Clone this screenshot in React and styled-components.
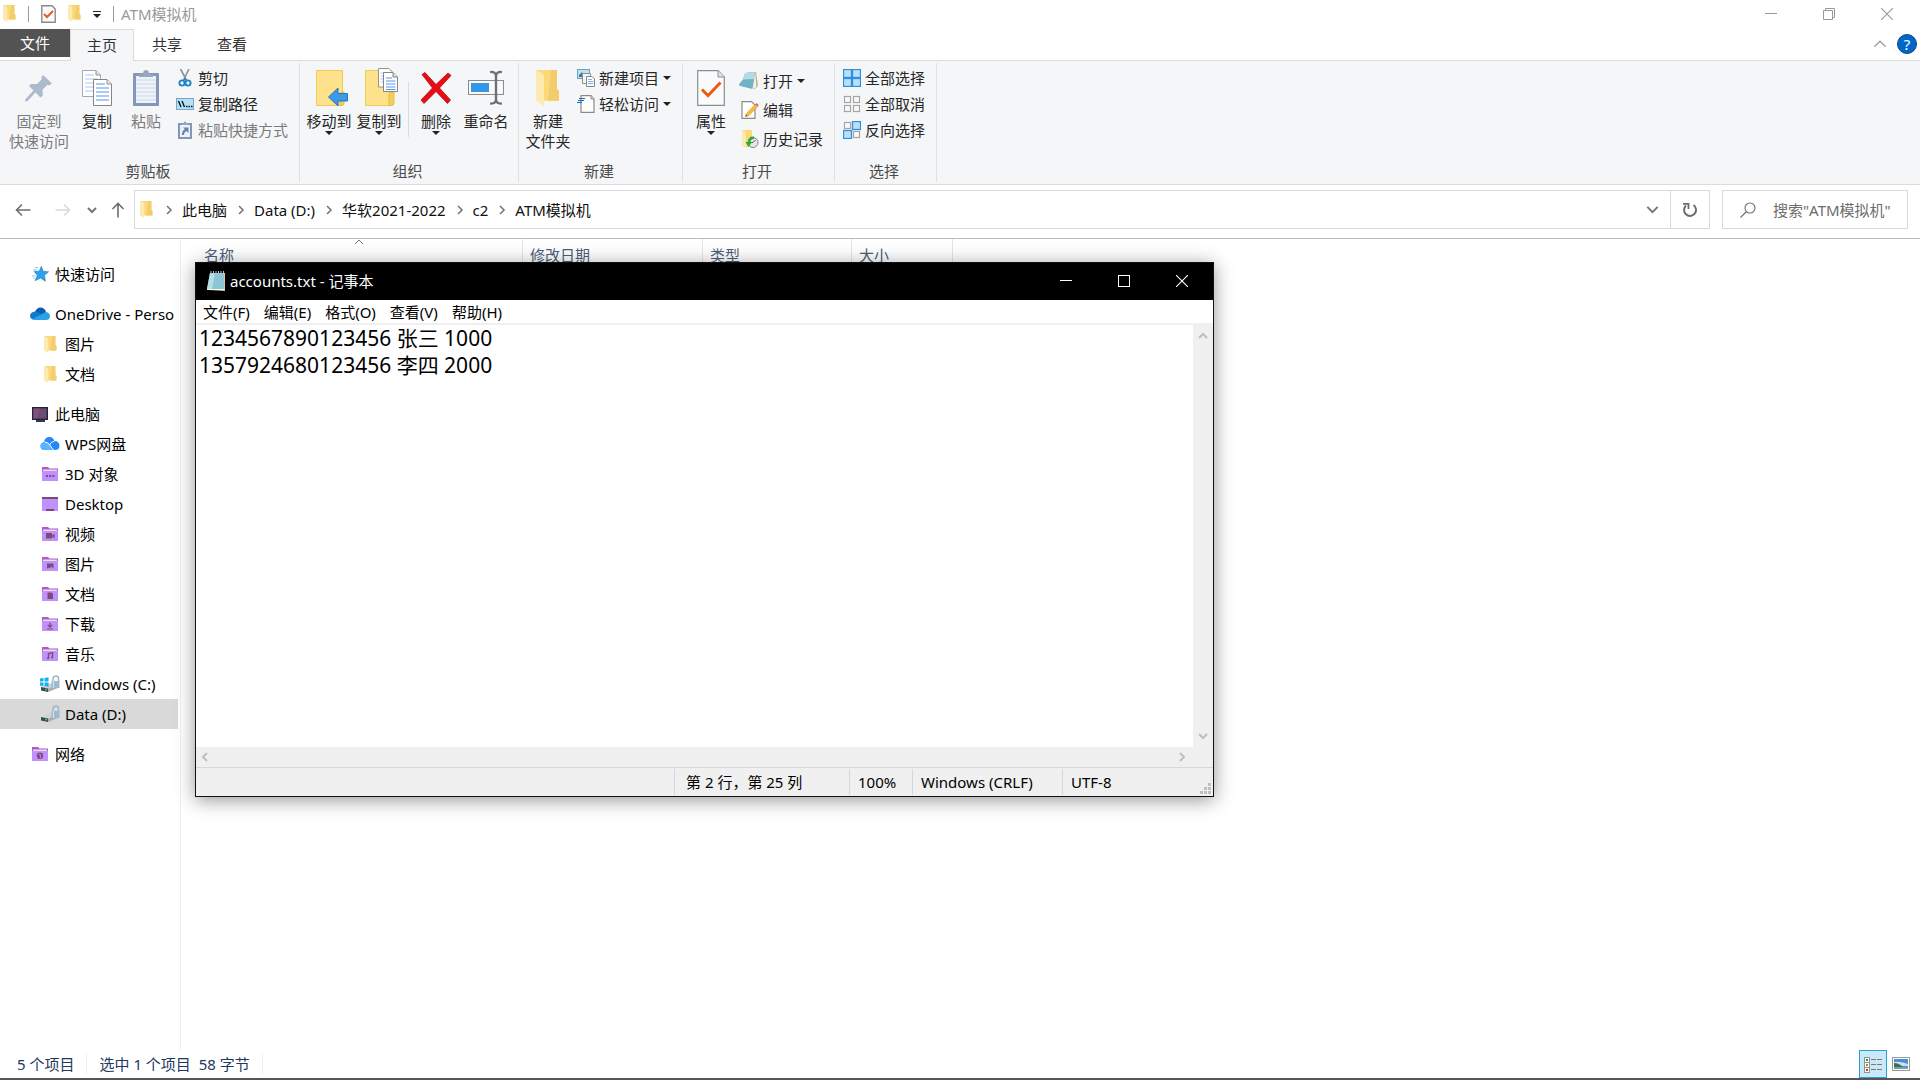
import React, { useState } from 'react';
import styled, { createGlobalStyle } from 'styled-components';

const GlobalStyle = createGlobalStyle`
  * {
    box-sizing: border-box;
  }

  body {
    margin: 0;
    background: #fff;
    overflow: hidden;
  }

  body, button, input, textarea {
    font-family: "Noto Sans", "Noto Sans CJK SC", sans-serif;
    font-size: 15px;
    line-height: 20px;
  }

  button {
    margin: 0;
    padding: 0;
    border: 0;
    background: none;
    color: inherit;
    white-space: nowrap;
  }

  svg {
    display: block;
    flex: none;
  }
`;

/* ---------- icons ---------- */

const FolderIcon = ({ width = 13, height = 17 }) => (
  <svg width={width} height={height} viewBox="0 0 24 34" preserveAspectRatio="none">
    <path d="M7 0H21V18L23 20V29H7Z" fill="#fbd878" />
    <path d="M15 0H21V18L23 20V29H12Z" fill="#f3cd6c" />
    <path d="M0 0L8 5V34L0 29Z" fill="#fdeab0" />
    <path d="M0 0H8V5Z" fill="#f6d98a" />
  </svg>
);

const CheckDocIcon = ({ width = 28, height = 36 }) => (
  <svg width={width} height={height} viewBox="0 0 28 36">
    <path d="M.7.7H21L27.3 7V35.3H.7Z" fill="#fafbfc" stroke="#8d8d8d" strokeWidth="1.2" />
    <path d="M21 .7V7H27.3" fill="#e4e4e4" stroke="#8d8d8d" />
    <path d="M5 19.5L11 25.5L23.5 12.5" fill="none" stroke="#ee5a14" strokeWidth="3" />
  </svg>
);

const SmallCheckDocIcon = () => (
  <svg width="15" height="18" viewBox="0 0 15 18">
    <path d="M.8.8H11L14.2 4V17.2H.8Z" fill="#f8fafb" stroke="#8a8a8a" strokeWidth="1.4" />
    <path d="M3 9L6 12L12 6" fill="none" stroke="#ee5a14" strokeWidth="2" />
  </svg>
);

const PinIcon = () => (
  <svg width="28" height="36" viewBox="0 0 28 36">
    <path d="M18 5L27 13.500L24 15.500L22.500 14.800L17.500 19.500L17.800 25.500L15.500 27.500L10.500 22.500L2.500 31L0 31.500L.5 29L8.500 20.500L4 16L6 14L12 14L17 9L16.200 7.500Z" fill="#adb9cd" />
  </svg>
);

const Page = ({ x, y, line = '#5593ee', light }) => (
  <g transform={`translate(${x} ${y})`}>
    <path d="M.5.5H14L18.500 5V26.500H.5Z" fill="#fff" stroke={light ? '#a9a9a9' : '#858585'} />
    <path d="M14 .5V5H18.500" fill="#e6e6e6" stroke="#929292" />
    <path d="M3 5H12M3 9H16M3 13H16M3 17H16M3 21H16" stroke={line} strokeWidth="1.200" />
  </g>
);

const CopyIcon = () => (
  <svg width="30" height="36" viewBox="0 0 30 36">
    <Page x={0} y={0} line="#a9c8f5" light />
    <Page x={11} y={9} />
  </svg>
);

const PasteIcon = () => (
  <svg width="26" height="36" viewBox="0 0 26 36">
    <rect y="3" width="26" height="33" rx="1" fill="#8497b9" />
    <rect x="3" y="6" width="20" height="27" fill="#eef2f9" />
    <path d="M3 10H23M3 14H23M3 18H23M3 22H23M3 26H23M3 30H23" stroke="#cdd8ea" />
    <path d="M6 7V4H10Q10 0 13 0Q16 0 16 4H20V7Z" fill="#97a6bf" />
  </svg>
);

const ScissorsIcon = () => (
  <svg width="18" height="18" viewBox="0 0 18 18">
    <path d="M4.500 0L11 12M13 0L7 12" stroke="#8b9298" strokeWidth="1.600" />
    <circle cx="6" cy="14" r="2.600" fill="none" stroke="#1c84c6" strokeWidth="1.900" />
    <circle cx="12" cy="14" r="2.600" fill="none" stroke="#1c84c6" strokeWidth="1.900" />
    <path d="M7.500 11.500L9 8.500L10.500 11.500Z" fill="#1c84c6" />
  </svg>
);

const PathIcon = () => (
  <svg width="18" height="12" viewBox="0 0 18 12">
    <rect x=".5" y=".5" width="17" height="11" fill="#b5e0fb" stroke="#7ba6c2" />
    <path d="M2.500 3L5 9M6 3L8.500 9" stroke="#111" strokeWidth="1.400" />
    <path d="M10 8.500H11.500M12.500 8.500H14M15 8.500H16.500" stroke="#111" strokeWidth="1.400" />
  </svg>
);

const PasteShortcutIcon = () => (
  <svg width="18" height="18" viewBox="0 0 18 18">
    <rect x="2" y="2" width="14" height="16" fill="#8497b9" />
    <rect x="4" y="4" width="10" height="12" fill="#eef2f9" />
    <path d="M6 4V2H7.500Q9-1.500 10.500 2H12V4Z" fill="#97a6bf" />
    <path d="M7 6.500H12.500V12L10.700 10.200Q8 11 8 14H6Q5.500 10.500 8.700 8.200Z" fill="#6d83ab" />
  </svg>
);

const MoveToIcon = () => (
  <svg width="38" height="36" viewBox="-6 0 38 36">
    <path d="M.5.5H26.500V35.500H.5Z" fill="#fde28b" stroke="#eccb58" />
    <path d="M24 35.500V24Q24 22 26 22H28V33.500Q28 35.500 25.500 35.500Z" fill="#f4cf60" stroke="#e5bd42" />
    <path d="M12.500 27L22 18V23.500H31.500V31H22V36Z" fill="#3b9ae8" stroke="#1f76c2" />
  </svg>
);

const CopyToIcon = () => (
  <svg width="40" height="38" viewBox="-6 0 40 38">
    <path d="M.5 2.500H26.500V37.500H.5Z" fill="#fde28b" stroke="#eccb58" />
    <path d="M24 37.500V26Q24 24 26 24H29V35.500Q29 37.500 26 37.500Z" fill="#f4cf60" stroke="#e5bd42" />
    <path d="M13.500.5H24L27.500 4V19H13.500Z" fill="#fff" stroke="#929292" />
    <path d="M15.500 5H22M15.500 8H22M15.500 11H22M15.500 14H22" stroke="#a9c8f5" />
    <path d="M18.500 4.500H28L32.500 9V23.500H18.500Z" fill="#fff" stroke="#858585" />
    <path d="M28 4.500V9H32.500" fill="#ddd" stroke="#858585" />
    <path d="M21 10H27M21 13H30.500M21 16H30.500M21 19H30.500M21 21.500H30.500" stroke="#5593ee" strokeWidth="1.200" />
  </svg>
);

const DeleteIcon = () => (
  <svg width="32" height="36" viewBox="0 0 32 36">
    <path d="M2 4.500L5 2.500L16 14.500L28 3L31 5.500L19.500 18L30.500 30L27.500 33.500L16 21.500L4 33.500L1 30L12.500 18Z" fill="#e60d17" stroke="#b30d14" strokeWidth=".8" />
  </svg>
);

const RenameIcon = () => (
  <svg width="36" height="36" viewBox="0 0 36 36">
    <rect x=".5" y="10.500" width="35" height="14" fill="#f8f9fa" stroke="#8b8b8b" />
    <rect x="3" y="13" width="18" height="9" fill="#3298e6" />
    <path d="M28 3V32" stroke="#707070" strokeWidth="2.400" />
    <path d="M22 2Q27 1.500 28 5Q29 1.500 34 2M22 33.500Q27 34 28 30.500Q29 34 34 33.500" fill="none" stroke="#707070" strokeWidth="2.200" />
  </svg>
);

const NewItemIcon = () => (
  <svg width="18" height="18" viewBox="0 0 18 18">
    <rect x=".5" y=".5" width="12" height="9" fill="#bfe2f4" stroke="#6f9fb9" />
    <path d="M2 6L5 3L7 8H2Z" fill="#2f8291" />
    <path d="M5.500 4.500H13.500V14.500H5.500Z" fill="#f4f4f4" stroke="#8f8f8f" />
    <path d="M9.500 7.500H15L17.500 10V17.500H9.500Z" fill="#fff" stroke="#878787" />
    <path d="M11 10.500H15M11 12.500H16.500M11 14.500H16.500" stroke="#7fb0ea" />
  </svg>
);

const EasyAccessIcon = () => (
  <svg width="18" height="18" viewBox="0 0 18 18">
    <path d="M4 .6H14L17 4V17.400H4Z" fill="#fff" stroke="#8a8a8a" strokeWidth="1.200" />
    <path d="M14 .6V4H17" fill="#ddd" stroke="#8a8a8a" />
    <path d="M2 3.500H8M1 5.500H7M0 7.500H5" stroke="#1e6cb5" strokeWidth="1.200" />
  </svg>
);

const OpenIcon = () => (
  <svg width="20" height="18" viewBox="0 0 20 18">
    <path d="M7 1L17 0L19 14L15 17.500Z" fill="#c6a877" />
    <path d="M6 1L16 0L14.500 15L13.500 17L1 14Q-1 13 1 11Q4.500 8 6 1Z" fill="#6fb3c4" />
    <path d="M6 1L16 0L15.200 7L4 7.500Z" fill="#b3dce6" />
    <path d="M13.500 17L16.300.5L17.500 15Z" fill="#f1efe9" />
  </svg>
);

const EditIcon = () => (
  <svg width="20" height="18" viewBox="0 0 20 18">
    <path d="M3 .6H12.500L16 4V17.400H3Z" fill="#fff" stroke="#8a8a8a" strokeWidth="1.200" />
    <path d="M6.500 15.500L7.500 12.500L16 3.500L18.500 5.500L10 14.500Z" fill="#f6bd3c" stroke="#d28e1e" strokeWidth=".6" />
    <path d="M16 3.500L17.500 2L19.800 4L18.500 5.500Z" fill="#df6b66" />
    <path d="M6.500 15.500L7 13.800L8.300 15Z" fill="#333" />
  </svg>
);

const HistoryIcon = () => (
  <svg width="20" height="18" viewBox="0 0 20 18">
    <path d="M3 0H13V17H5L3 15Z" fill="#fbd878" />
    <path d="M3 0L7 2V18L3 15Z" fill="#fdeab0" />
    <circle cx="14" cy="12.500" r="5" fill="#e6e6e6" stroke="#858585" />
    <path d="M14 12.500L16.500 10M14 12.500H11.500" stroke="#555" />
    <path d="M15 6.500Q9 6 9 12L6.500 12L9.500 17L13 12H11.500Q11.500 9 15 9Z" fill="#27ae35" />
  </svg>
);

// `on` lists which of the four tiles are highlighted
const TilesIcon = ({ on }) => (
  <svg width="18" height="18" viewBox="0 0 18 18">
    {[[0, 0], [1, 0], [0, 1], [1, 1]].map(([cx, cy], i) => (
      on[i]
        ? <rect key={i} x={cx * 9 + 0.5} y={cy * 9 + 0.5} width="8" height="8" fill="#b9e0fb" stroke="#2f8fdc" strokeWidth="1.300" />
        : <rect key={i} x={cx * 9 + 1.5} y={cy * 9 + 1.5} width="6" height="6" fill="#fafafa" stroke="#a5a5a5" strokeWidth="1.200" />
    ))}
  </svg>
);

const Chevron = ({ dir = 'down', size = 10, color = '#767676', weight = 2 }) => {
  const paths = {
    down: 'M1 3L5 7L9 3',
    up: 'M1 7L5 3L9 7',
    left: 'M7 1L3 5L7 9',
    right: 'M3 1L7 5L3 9',
  };
  return (
    <svg width={size} height={size} viewBox="0 0 10 10">
      <path d={paths[dir]} fill="none" stroke={color} strokeWidth={weight * 10 / size} />
    </svg>
  );
};

const MinimizeGlyph = () => (
  <svg width="12" height="12"><path d="M0 5.500H12" stroke="currentColor" /></svg>
);

const RestoreGlyph = () => (
  <svg width="12" height="12">
    <path d="M.5 2.500H9.500V11.500H.5ZM2.500 2.500V.5H11.500V9.500H9.500" fill="none" stroke="currentColor" />
  </svg>
);

const MaximizeGlyph = () => (
  <svg width="12" height="12"><rect x=".5" y=".5" width="11" height="11" fill="none" stroke="currentColor" /></svg>
);

const CloseGlyph = () => (
  <svg width="12" height="12"><path d="M0 0L12 12M12 0L0 12" stroke="currentColor" strokeWidth="1.100" /></svg>
);

const ArrowGlyph = ({ color, dir }) => (
  <svg width="16" height="16" viewBox="0 0 16 16">
    <path
      d="M15.500 8H1.500M7 2.500L1.500 8L7 13.500"
      fill="none"
      stroke={color}
      strokeWidth="1.600"
      transform={`rotate(${dir} 8 8)`}
    />
  </svg>
);

const RefreshIcon = () => (
  <svg width="16" height="16" viewBox="0 0 16 16">
    <path d="M11.500 3A6 6 0 1 1 4 3.500" fill="none" stroke="#6d6d6d" strokeWidth="2" />
    <path d="M1 1.800H6.500V7" fill="none" stroke="#6d6d6d" strokeWidth="1.800" />
  </svg>
);

const SearchIcon = () => (
  <svg width="16" height="16" viewBox="0 0 16 16">
    <circle cx="10" cy="6" r="5" fill="none" stroke="#6d6d6d" strokeWidth="1.100" />
    <path d="M6.500 9.500L.5 15.500" stroke="#6d6d6d" strokeWidth="1.100" />
  </svg>
);

const StarIcon = () => (
  <svg width="18" height="16" viewBox="0 0 20 17">
    <path d="M11.500 0L13.500 5.500L19.500 6L15 10L16 16.500L10.500 13L4.500 16L7 10L3.500 5.800L9 5.500Z" fill="#2aa3ea" stroke="#1673bd" strokeWidth=".6" />
    <path d="M4 1.500H8M2 4H7M1 10.500H5M2 13H4" stroke="#79bfe8" />
  </svg>
);

const OneDriveIcon = () => (
  <svg width="20" height="14" viewBox="0 0 20 14">
    <path d="M5 5Q7 0 11 .5Q15 1 16 5L13 9L5 6Z" fill="#0a5cb0" />
    <path d="M3 12.500Q0 11.500 0 8.500Q.5 5 5 4.500Q8 4.500 12 7.500L5 13Z" fill="#1078d2" />
    <path d="M12 7L16 5Q20 5.500 20 9.500Q19.500 13 16 13H5Q3.500 13 2.500 12Z" fill="#28a2e8" />
  </svg>
);

const ComputerIcon = () => (
  <svg width="16" height="15" viewBox="0 0 16 15">
    <rect x=".7" y=".7" width="14.600" height="11.600" fill="#6c4a74" stroke="#22243a" strokeWidth="1.400" />
    <path d="M1.500 1.500H8L5 11.500H1.500Z" fill="#82507a" />
    <rect x="4" y="13" width="9" height="2" fill="#34364b" />
  </svg>
);

const WpsIcon = () => (
  <svg width="20" height="14" viewBox="0 0 20 14">
    <path d="M4 5Q5 0 9.500 0Q13 0 14.500 4Q19 4 19.500 8.500Q19.500 13 15 13H5Q.5 13 .5 9Q.5 6 4 5Z" fill="#2487fb" />
    <path d="M4.500 5.500Q8 5 10 8.500L13 13H5Q.5 13 .5 9Q.5 6 4.500 5.500Z" fill="#57b4ff" />
    <path d="M4.500 5Q8.500 5 10.500 9Q12 12 14 13M14.500 4Q10.500 5 9.500 8" fill="none" stroke="#fff" strokeWidth="1" />
  </svg>
);

const purpleGlyphs = {
  objects: <path d="M4 9H6M7.200 9H9.200M10.400 9H12.400" stroke="#7f4a78" strokeWidth="1.800" />,
  video: <path d="M4 6H10V11.500H4ZM10 8.500L12.500 6.500V11.500L10 9.500Z" fill="#7f4a78" />,
  picture: <path d="M5 6.500H11.500V12L9.500 9.500L7.500 11.500L6.500 10.500L5 12Z" fill="#7f4a78" />,
  document: <path d="M5.500 5.500H9.500L11 7V12H5.500Z" fill="#7f4a78" />,
  download: <path d="M8 5.500V10M5.800 8L8 10.200L10.200 8M5 12H11" fill="none" stroke="#7f4a78" strokeWidth="1.200" />,
  music: <path d="M6.500 11V6.500L10.500 5.800V10.200M5 11.300H7M9 10.500H11" fill="none" stroke="#7f4a78" strokeWidth="1.400" />,
  network: (
    <>
      <circle cx="8" cy="8.800" r="3.200" fill="#7f4a78" />
      <path d="M6.500 7L9 8L8 10L9.500 11" fill="none" stroke="#bf92fb" strokeWidth=".9" />
    </>
  ),
};

const PurpleFolderIcon = ({ glyph }) => (
  <svg width="16" height="14" viewBox="0 0 16 14">
    <path d="M0 0H6L7.500 1.500H16V6H0Z" fill="#ae5bc8" />
    <rect x="1" y="2.500" width="14" height="2" fill="#eadcf2" />
    <rect y="4" width="16" height="10" fill="#bf92fb" />
    {purpleGlyphs[glyph]}
  </svg>
);

const DesktopIcon = () => (
  <svg width="16" height="14" viewBox="0 0 16 14">
    <rect width="16" height="14" fill="#bf92fb" />
    <rect width="16" height="2" fill="#7d4879" />
    <rect x="4" y="12" width="8" height="2" fill="#7d4879" />
  </svg>
);

const DriveIcon = ({ system }) => (
  <svg width="20" height="18" viewBox="0 0 20 18">
    <path d="M1 12L9 8.500H19V12L8 16.500L1 15Z" fill="#d0d3d4" />
    <path d="M1 12L8 13.500V17L1 15.500Z" fill="#454b48" />
    <path d="M8 13.500L19 9.500V12.500L8 17Z" fill="#a9aeb0" />
    <path d="M5 14.500H7" stroke="#35c84b" strokeWidth="1.300" />
    <path d="M13 7V3.500Q13.500 1 16 1Q18.500 1 18.500 3.500V6" fill="none" stroke="#a3b6c2" strokeWidth="1.500" />
    <rect x="11.500" y="6" width="8" height="7" fill="#9dbbcd" />
    <path d="M13.500 6V13" stroke="#d7e6ee" />
    {system && <path d="M0 3.500L3.500 3V6.500H0ZM4.500 2.900L8.500 2.300V6.500H4.500ZM0 7.500H3.500V11L0 10.500ZM4.500 7.500H8.500V11.700L4.500 11.100Z" fill="#12b1f2" />}
  </svg>
);

const NotepadIcon = () => (
  <svg width="20" height="20" viewBox="0 0 20 20">
    <path d="M6 2H19V20L3 19Z" fill="#d8c7a3" />
    <path d="M4 2H18V18H1Z" fill="#8cc6d4" />
    <path d="M4 2H9L6 18H1Z" fill="#b4dfe8" />
    <path d="M5 0V3M7.500 0V3M10 0V3M12.500 0V3M15 0V3M17.500 0V3" stroke="#b7c3c7" />
    <path d="M1 18H18V19H1Z" fill="#f5f5f2" />
  </svg>
);

const DetailsViewIcon = () => (
  <svg width="20" height="17" viewBox="0 0 20 17">
    {['#2f8a9b', '#879b22', '#c43c22'].map((color, i) => (
      <g key={color}>
        <rect x="1.500" y={i * 5 + 1.5} width="5" height="5" fill="#fff" stroke="#929292" />
        <rect x="3" y={i * 5 + 3} width="2" height="2" fill={color} />
        <path d={`M8 ${i * 5 + 3.5}H13M14 ${i * 5 + 3.5}H19`} stroke="#777" />
      </g>
    ))}
  </svg>
);

const ThumbnailViewIcon = () => (
  <svg width="18" height="14" viewBox="0 0 18 14">
    <rect x=".5" y=".5" width="17" height="13" fill="#fff" stroke="#999" />
    <rect x="2" y="2" width="14" height="10" fill="#4b8fd6" />
    <path d="M2 5Q8 4 16 7V9H2Z" fill="#c9e1f0" />
    <path d="M2 6Q7 6 11 10H2Z" fill="#39715c" />
    <path d="M2 10H16V12H2Z" fill="#7a9dab" />
  </svg>
);

const ResizeGrip = styled.svg`
  align-self: flex-end;
  margin: 0 2px 2px auto;
`;

/* ---------- explorer frame ---------- */

const Explorer = styled.div`
  display: flex;
  flex-direction: column;
  height: 100vh;
  border-bottom: 2px solid #555;
  color: #000;
`;

const TitleBar = styled.header`
  display: flex;
  align-items: center;
  height: 29px;
  padding: 0 4px 2px 3px;
  color: #999;
`;

const QuickTools = styled.div`
  display: flex;
  align-items: center;
  gap: 12px;
  margin-right: 7px;
`;

const BarLine = styled.span`
  width: 1px;
  height: 16px;
  background: #9a9a9a;
`;

const WindowButtons = styled.div`
  display: flex;
  align-self: stretch;
  margin-left: auto;
`;

const WindowButton = styled.button`
  display: flex;
  align-items: center;
  justify-content: center;
  width: 58px;
`;

const Caret = styled.span`
  border: 4px solid transparent;
  border-top-color: #222;
  border-bottom: 0;
`;

const BarredCaret = styled(Caret)`
  position: relative;
  margin: 4px 0 0;

  &::before {
    content: '';
    position: absolute;
    left: -4px;
    top: -7px;
    width: 8px;
    height: 1px;
    background: #222;
  }
`;

const TabStrip = styled.nav`
  display: flex;
  align-items: stretch;
  height: 32px;
  border-bottom: 1px solid #dadbdc;
  color: #333;
`;

const FileTab = styled.button`
  width: 70px;
  height: 28px;
  background: #535353;
  color: #fff;
`;

const Tab = styled.button`
  width: 64px;
  margin-right: 1px;
  padding-bottom: 2px;
  border: 1px solid ${({ $active }) => ($active ? '#dadbdc' : 'transparent')};
  border-bottom: 0;
  margin-bottom: ${({ $active }) => ($active ? '-1px' : '0')};
  background: ${({ $active }) => ($active ? '#f5f6f8' : 'transparent')};
`;

const TabTools = styled.div`
  display: flex;
  align-items: center;
  gap: 10px;
  margin-left: auto;
  padding: 0 3px 2px 0;
`;

const HelpButton = styled.button`
  width: 20px;
  height: 20px;
  border: 1px solid #10477f;
  border-radius: 50%;
  background: #0067c8;
  color: #fff;
  line-height: 18px;
`;

/* ---------- ribbon ---------- */

const Ribbon = styled.section`
  display: flex;
  flex: none;
  padding: 2px 0;
  border-bottom: 1px solid #dadbdc;
  background: #f5f6f8;
  color: #262626;
`;

const Group = styled.div`
  padding: 0 7px 0 4px;
  border-right: 1px solid #e0e1e3;
`;

const GroupBody = styled.div`
  display: flex;
  height: 98px;
`;

const GroupTitle = styled.div`
  height: 21px;
  text-align: center;
  color: #4a4a4a;
`;

const BigButton = styled.button`
  display: flex;
  flex-direction: column;
  align-items: center;
  width: ${({ $w }) => $w || 50}px;
  padding-top: 7px;
  color: ${({ disabled }) => (disabled ? '#7b7b7b' : '#262626')};
`;

const BigIcon = styled.span`
  display: flex;
  align-items: flex-end;
  justify-content: center;
  height: 36px;
  margin-bottom: 5px;
`;

const BigLabel = styled.span`
  white-space: pre-line;
`;

const GroupDivider = styled.span`
  width: 1px;
  height: 55px;
  margin: 19px 2px 0 4px;
  background: #dcdddf;
`;

const SmallColumn = styled.div`
  display: flex;
  flex-direction: column;
  padding-top: ${({ $roomy }) => ($roomy ? 3 : 2)}px;
`;

const SmallButton = styled.button`
  display: flex;
  align-items: center;
  gap: 4px;
  height: ${({ $roomy }) => ($roomy ? 29 : 26)}px;
  padding: 0 4px;
  color: ${({ disabled }) => (disabled ? '#7b7b7b' : '#262626')};
`;

/* ---------- address row ---------- */

const AddressRow = styled.div`
  display: flex;
  flex: none;
  align-items: center;
  height: 54px;
  padding: 0 12px 4px 15px;
  border-bottom: 1px solid #bcbcbc;
`;

const NavButtons = styled.div`
  display: flex;
  align-items: center;
  width: 119px;
`;

const NavButton = styled.button`
  margin-right: ${({ $gap }) => $gap}px;
`;

const AddressBox = styled.div`
  display: flex;
  flex: 1;
  align-items: center;
  height: 39px;
  padding-left: 5px;
  border: 1px solid #d9d9d9;
`;

const Crumbs = styled.ol`
  display: flex;
  flex: 1;
  margin: 0;
  padding: 0 0 0 2px;
  list-style: none;
`;

const Crumb = styled.li`
  display: flex;
  align-items: center;

  svg {
    margin: 0 8px 0 9px;
  }

  a {
    color: #111;
    text-decoration: none;
  }
`;

const DropButton = styled.button`
  display: flex;
  align-items: center;
  justify-content: center;
  width: 36px;
  height: 37px;
`;

const RefreshButton = styled(DropButton)`
  width: 39px;
  border-left: 1px solid #d9d9d9;
`;

const SearchBox = styled.label`
  display: flex;
  align-items: center;
  gap: 17px;
  width: 186px;
  height: 39px;
  margin-left: 12px;
  padding-left: 17px;
  border: 1px solid #d9d9d9;
`;

const SearchInput = styled.input`
  flex: 1;
  min-width: 0;
  padding: 0;
  border: 0;
  outline: 0;

  &::placeholder {
    color: #6d6d6d;
    opacity: 1;
  }
`;

/* ---------- body ---------- */

const Body = styled.div`
  display: flex;
  flex: 1;
  min-height: 0;
`;

const Sidebar = styled.nav`
  width: 181px;
  padding: 20px 2px 0 0;
  border-right: 1px solid #f0f0f0;
`;

const TreeSection = styled.div`
  margin-bottom: 10px;
`;

const TreeItem = styled.a`
  display: flex;
  align-items: center;
  gap: 5px;
  height: 30px;
  padding-left: ${({ $child }) => ($child ? 40 : 30)}px;
  overflow: hidden;
  background: ${({ $selected }) => ($selected ? '#d9d9d9' : 'transparent')};
  color: #000;
  text-decoration: none;
  white-space: nowrap;
`;

const TreeIcon = styled.span`
  display: flex;
  flex: none;
  justify-content: center;
  width: 20px;
`;

const FileList = styled.main`
  flex: 1;
`;

const FileTable = styled.table`
  border-collapse: separate;
  border-spacing: 0;
  table-layout: fixed;
  width: 772px;
`;

const ColumnHead = styled.th`
  position: relative;
  width: ${({ $w }) => $w}px;
  height: 32px;
  padding: 0 0 1px ${({ $first }) => ($first ? 23 : 7)}px;
  border-right: 1px solid #e5e5e5;
  color: #4c607a;
  font-weight: normal;
  text-align: left;
`;

const SortMark = styled.span`
  position: absolute;
  top: -2px;
  left: 173px;
`;

const StatusBar = styled.footer`
  display: flex;
  flex: none;
  align-items: center;
  height: 28px;
  padding: 0 5px 0 17px;
  color: #1e395b;
`;

const StatusItem = styled.span`
  padding-right: 12px;
  margin-right: 12px;
  border-right: 1px solid #f0f0f0;
  white-space: pre;
`;

const ViewButtons = styled.div`
  display: flex;
  align-self: stretch;
  margin-left: auto;
`;

const ViewButton = styled.button`
  display: flex;
  align-items: center;
  justify-content: center;
  width: 28px;
  border: ${({ $active }) => ($active ? '1px solid #26a0da' : '0')};
  background: ${({ $active }) => ($active ? '#cbe8f6' : 'none')};
`;

/* ---------- notepad window ---------- */

const NotepadWindow = styled.section`
  position: absolute;
  left: 195px;
  top: 262px;
  display: flex;
  flex-direction: column;
  width: 1019px;
  height: 535px;
  border: 1px solid #111;
  background: #f0f0f0;
  box-shadow: 0 3px 18px rgba(0, 0, 0, 0.42);
`;

const NotepadTitle = styled.header`
  display: flex;
  align-items: center;
  gap: 4px;
  height: 37px;
  padding: 0 2px 2px 10px;
  background: #000;
  color: #fff;
`;

const MenuBar = styled.nav`
  display: flex;
  height: 25px;
  border-bottom: 2px solid #f0f0f0;
  background: #fff;
`;

const MenuItem = styled.button`
  padding: 0 7px;
`;

const EditorRow = styled.div`
  display: flex;
  flex: 1;
  min-height: 0;
`;

const Editor = styled.textarea`
  flex: 1;
  padding: 0 3px;
  border: 0;
  outline: 0;
  resize: none;
  overflow: hidden;
  background: #fff;
  color: #000;
  font-size: 21px;
  line-height: 27px;
  white-space: pre;
`;

const ScrollTrack = styled.div`
  display: flex;
  flex-direction: ${({ $vertical }) => ($vertical ? 'column' : 'row')};
  justify-content: space-between;
  align-items: center;
  ${({ $vertical }) => ($vertical
    ? 'width: 20px; padding: 6px 0;'
    : 'height: 20px; padding: 0 26px 0 4px;')}
`;

const NotepadStatus = styled.footer`
  display: flex;
  height: 29px;
  border-top: 1px solid #d7d7d7;
`;

const StatusCell = styled.span`
  width: ${({ $w }) => $w}px;
  margin: 1px 0;
  padding-left: ${({ $pad }) => $pad || 8}px;
  border-left: 1px solid #d7d7d7;
  line-height: 26px;
`;

const StatusSpacer = styled.span`
  width: 478px;
`;

/* ---------- data ---------- */

const crumbs = ['此电脑', 'Data (D:)', '华软2021-2022', 'c2', 'ATM模拟机'];

const tree = [
  [{ label: '快速访问', icon: <StarIcon /> }],
  [
    { label: 'OneDrive - Perso', icon: <OneDriveIcon /> },
    { label: '图片', icon: <FolderIcon />, child: true },
    { label: '文档', icon: <FolderIcon />, child: true },
  ],
  [
    { label: '此电脑', icon: <ComputerIcon /> },
    { label: 'WPS网盘', icon: <WpsIcon />, child: true },
    { label: '3D 对象', icon: <PurpleFolderIcon glyph="objects" />, child: true },
    { label: 'Desktop', icon: <DesktopIcon />, child: true },
    { label: '视频', icon: <PurpleFolderIcon glyph="video" />, child: true },
    { label: '图片', icon: <PurpleFolderIcon glyph="picture" />, child: true },
    { label: '文档', icon: <PurpleFolderIcon glyph="document" />, child: true },
    { label: '下载', icon: <PurpleFolderIcon glyph="download" />, child: true },
    { label: '音乐', icon: <PurpleFolderIcon glyph="music" />, child: true },
    { label: 'Windows (C:)', icon: <DriveIcon system />, child: true },
    { label: 'Data (D:)', icon: <DriveIcon />, child: true, selected: true },
  ],
  [{ label: '网络', icon: <PurpleFolderIcon glyph="network" /> }],
];

const columns = [
  { label: '名称', width: 342, sorted: true },
  { label: '修改日期', width: 180 },
  { label: '类型', width: 149 },
  { label: '大小', width: 101 },
];

const menus = ['文件(F)', '编辑(E)', '格式(O)', '查看(V)', '帮助(H)'];

/* ---------- parts ---------- */

const Big = ({ icon, label, width, caret, disabled }) => (
  <BigButton type="button" $w={width} disabled={disabled}>
    <BigIcon>{icon}</BigIcon>
    <BigLabel>{label}</BigLabel>
    {caret && <Caret />}
  </BigButton>
);

const Small = ({ icon, label, caret, disabled, roomy }) => (
  <SmallButton type="button" disabled={disabled} $roomy={roomy}>
    {icon}
    <span>{label}</span>
    {caret && <Caret />}
  </SmallButton>
);

const RibbonGroup = ({ title, children }) => (
  <Group role="group" aria-label={title}>
    <GroupBody>{children}</GroupBody>
    <GroupTitle>{title}</GroupTitle>
  </Group>
);

const RibbonBar = () => (
  <Ribbon>
    <RibbonGroup title="剪贴板">
      <Big icon={<PinIcon />} label={'固定到\n快速访问'} width={70} disabled />
      <Big icon={<CopyIcon />} label="复制" width={46} />
      <Big icon={<PasteIcon />} label="粘贴" width={52} disabled />
      <SmallColumn>
        <Small icon={<ScissorsIcon />} label="剪切" />
        <Small icon={<PathIcon />} label="复制路径" />
        <Small icon={<PasteShortcutIcon />} label="粘贴快捷方式" disabled />
      </SmallColumn>
    </RibbonGroup>
    <RibbonGroup title="组织">
      <Big icon={<MoveToIcon />} label="移动到" caret />
      <Big icon={<CopyToIcon />} label="复制到" caret />
      <GroupDivider />
      <Big icon={<DeleteIcon />} label="删除" caret />
      <Big icon={<RenameIcon />} label="重命名" />
    </RibbonGroup>
    <RibbonGroup title="新建">
      <Big icon={<FolderIcon width={24} height={36} />} label={'新建\n文件夹'} />
      <SmallColumn>
        <Small icon={<NewItemIcon />} label="新建项目" caret />
        <Small icon={<EasyAccessIcon />} label="轻松访问" caret />
      </SmallColumn>
    </RibbonGroup>
    <RibbonGroup title="打开">
      <Big icon={<CheckDocIcon />} label="属性" width={48} caret />
      <SmallColumn $roomy>
        <Small icon={<OpenIcon />} label="打开" caret roomy />
        <Small icon={<EditIcon />} label="编辑" roomy />
        <Small icon={<HistoryIcon />} label="历史记录" roomy />
      </SmallColumn>
    </RibbonGroup>
    <RibbonGroup title="选择">
      <SmallColumn>
        <Small icon={<TilesIcon on={[1, 1, 1, 1]} />} label="全部选择" />
        <Small icon={<TilesIcon on={[0, 0, 0, 0]} />} label="全部取消" />
        <Small icon={<TilesIcon on={[0, 1, 1, 0]} />} label="反向选择" />
      </SmallColumn>
    </RibbonGroup>
  </Ribbon>
);

const AddressBar = () => (
  <AddressRow>
    <NavButtons>
      <NavButton type="button" aria-label="后退" $gap={24}><ArrowGlyph color="#6d6d6d" dir={0} /></NavButton>
      <NavButton type="button" aria-label="前进" $gap={16}><ArrowGlyph color="#d9d9d9" dir={180} /></NavButton>
      <NavButton type="button" aria-label="最近浏览的位置" $gap={13}><Chevron /></NavButton>
      <NavButton type="button" aria-label="上移" $gap={0}><ArrowGlyph color="#6d6d6d" dir={90} /></NavButton>
    </NavButtons>
    <AddressBox>
      <FolderIcon />
      <Crumbs>
        {crumbs.map(name => (
          <Crumb key={name}>
            <Chevron dir="right" weight={1.6} />
            <a href="#path">{name}</a>
          </Crumb>
        ))}
      </Crumbs>
      <DropButton type="button" aria-label="历史"><Chevron size={13} /></DropButton>
      <RefreshButton type="button" aria-label="刷新"><RefreshIcon /></RefreshButton>
    </AddressBox>
    <SearchBox>
      <SearchIcon />
      <SearchInput type="text" aria-label="搜索" placeholder={'搜索"ATM模拟机"'} />
    </SearchBox>
  </AddressRow>
);

const Notepad = () => {
  const [text, setText] = useState('1234567890123456 张三 1000\n1357924680123456 李四 2000');

  return (
    <NotepadWindow aria-label="记事本">
      <NotepadTitle>
        <NotepadIcon />
        <span>accounts.txt - 记事本</span>
        <WindowButtons>
          <WindowButton type="button" aria-label="最小化"><MinimizeGlyph /></WindowButton>
          <WindowButton type="button" aria-label="最大化"><MaximizeGlyph /></WindowButton>
          <WindowButton type="button" aria-label="关闭"><CloseGlyph /></WindowButton>
        </WindowButtons>
      </NotepadTitle>
      <MenuBar>
        {menus.map(name => <MenuItem key={name} type="button">{name}</MenuItem>)}
      </MenuBar>
      <EditorRow>
        <Editor
          aria-label="文本"
          spellCheck={false}
          value={text}
          onChange={e => setText(e.target.value)}
        />
        <ScrollTrack $vertical>
          <Chevron dir="up" color="#bfbfbf" />
          <Chevron dir="down" color="#bfbfbf" />
        </ScrollTrack>
      </EditorRow>
      <ScrollTrack>
        <Chevron dir="left" color="#bfbfbf" />
        <Chevron dir="right" color="#bfbfbf" />
      </ScrollTrack>
      <NotepadStatus>
        <StatusSpacer />
        <StatusCell $w={175} $pad={11}>第 2 行，第 25 列</StatusCell>
        <StatusCell $w={63}>100%</StatusCell>
        <StatusCell $w={150}>Windows (CRLF)</StatusCell>
        <StatusCell $w={100}>UTF-8</StatusCell>
        <ResizeGrip width="11" height="11" viewBox="0 0 11 11">
          <path d="M8 0H11V3H8ZM4 4H7V7H4ZM8 4H11V7H8ZM0 8H3V11H0ZM4 8H7V11H4ZM8 8H11V11H8Z" fill="#bfbfbf" />
        </ResizeGrip>
      </NotepadStatus>
    </NotepadWindow>
  );
};

const App = () => (
  <>
    <GlobalStyle />
    <Explorer>
      <TitleBar>
        <QuickTools>
          <FolderIcon />
          <BarLine />
          <SmallCheckDocIcon />
          <FolderIcon />
          <BarredCaret />
          <BarLine />
        </QuickTools>
        <span>ATM模拟机</span>
        <WindowButtons>
          <WindowButton type="button" aria-label="最小化"><MinimizeGlyph /></WindowButton>
          <WindowButton type="button" aria-label="还原"><RestoreGlyph /></WindowButton>
          <WindowButton type="button" aria-label="关闭"><CloseGlyph /></WindowButton>
        </WindowButtons>
      </TitleBar>
      <TabStrip>
        <FileTab type="button">文件</FileTab>
        <Tab type="button" $active>主页</Tab>
        <Tab type="button">共享</Tab>
        <Tab type="button">查看</Tab>
        <TabTools>
          <Chevron dir="up" size={14} color="#a0a0a0" weight={1.4} />
          <HelpButton type="button">?</HelpButton>
        </TabTools>
      </TabStrip>
      <RibbonBar />
      <AddressBar />
      <Body>
        <Sidebar>
          {tree.map(section => (
            <TreeSection key={section[0].label}>
              {section.map(({ label, icon, child, selected }) => (
                <TreeItem key={label} href="#folder" $child={child} $selected={selected}>
                  <TreeIcon>{icon}</TreeIcon>
                  {label}
                </TreeItem>
              ))}
            </TreeSection>
          ))}
        </Sidebar>
        <FileList>
          <FileTable>
            <thead>
              <tr>
                {columns.map(({ label, width, sorted }) => (
                  <ColumnHead key={label} $w={width} $first={sorted}>
                    {label}
                    {sorted && <SortMark><Chevron dir="up" weight={1} /></SortMark>}
                  </ColumnHead>
                ))}
              </tr>
            </thead>
          </FileTable>
        </FileList>
      </Body>
      <StatusBar>
        <StatusItem>5 个项目</StatusItem>
        <StatusItem>{'选中 1 个项目  58 字节'}</StatusItem>
        <ViewButtons>
          <ViewButton type="button" aria-label="详细信息" $active><DetailsViewIcon /></ViewButton>
          <ViewButton type="button" aria-label="大缩略图"><ThumbnailViewIcon /></ViewButton>
        </ViewButtons>
      </StatusBar>
    </Explorer>
    <Notepad />
  </>
);

export default App;
